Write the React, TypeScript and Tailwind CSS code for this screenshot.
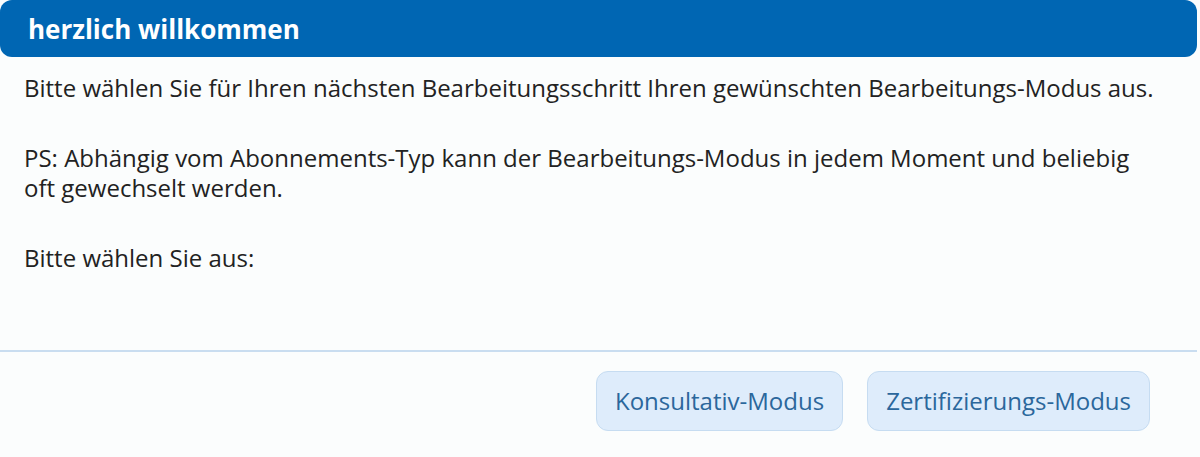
import React from "react";

export default function App() {
  return (
    <div
      className="w-[1200px] h-[457px] bg-[#fbfdfd] flex flex-col"
      style={{ fontFamily: '"Open Sans", "Noto Sans", sans-serif' }}
    >
      <div className="w-[1197px] h-[57px] bg-[#0066b3] rounded-[12px] flex items-center px-[28px]">
        <h1 className="text-white text-[26px] font-bold leading-none">herzlich willkommen</h1>
      </div>
      <div className="w-[1197px] pl-[24px] pr-[37px] pt-[16px] h-[293px] text-[#222] text-[24px] leading-[30px] flex flex-col gap-[40px]">
        <p>Bitte wählen Sie für Ihren nächsten Bearbeitungsschritt Ihren gewünschten Bearbeitungs-Modus aus.</p>
        <p>PS: Abhängig vom Abonnements-Typ kann der Bearbeitungs-Modus in jedem Moment und beliebig oft gewechselt werden.</p>
        <p>Bitte wählen Sie aus:</p>
      </div>
      <div className="w-[1197px] h-[2px] bg-[#c9ddf0]" />
      <div className="w-[1197px] flex justify-end gap-[24px] pt-[19px] pr-[47px]">
        <button className="h-[60px] px-[18px] rounded-[12px] bg-[#deecfb] border border-[#c6dcf1] text-[#2b679c] text-[24px]">
          Konsultativ-Modus
        </button>
        <button className="h-[60px] px-[18px] rounded-[12px] bg-[#deecfb] border border-[#c6dcf1] text-[#2b679c] text-[24px]">
          Zertifizierungs-Modus
        </button>
      </div>
    </div>
  );
}
